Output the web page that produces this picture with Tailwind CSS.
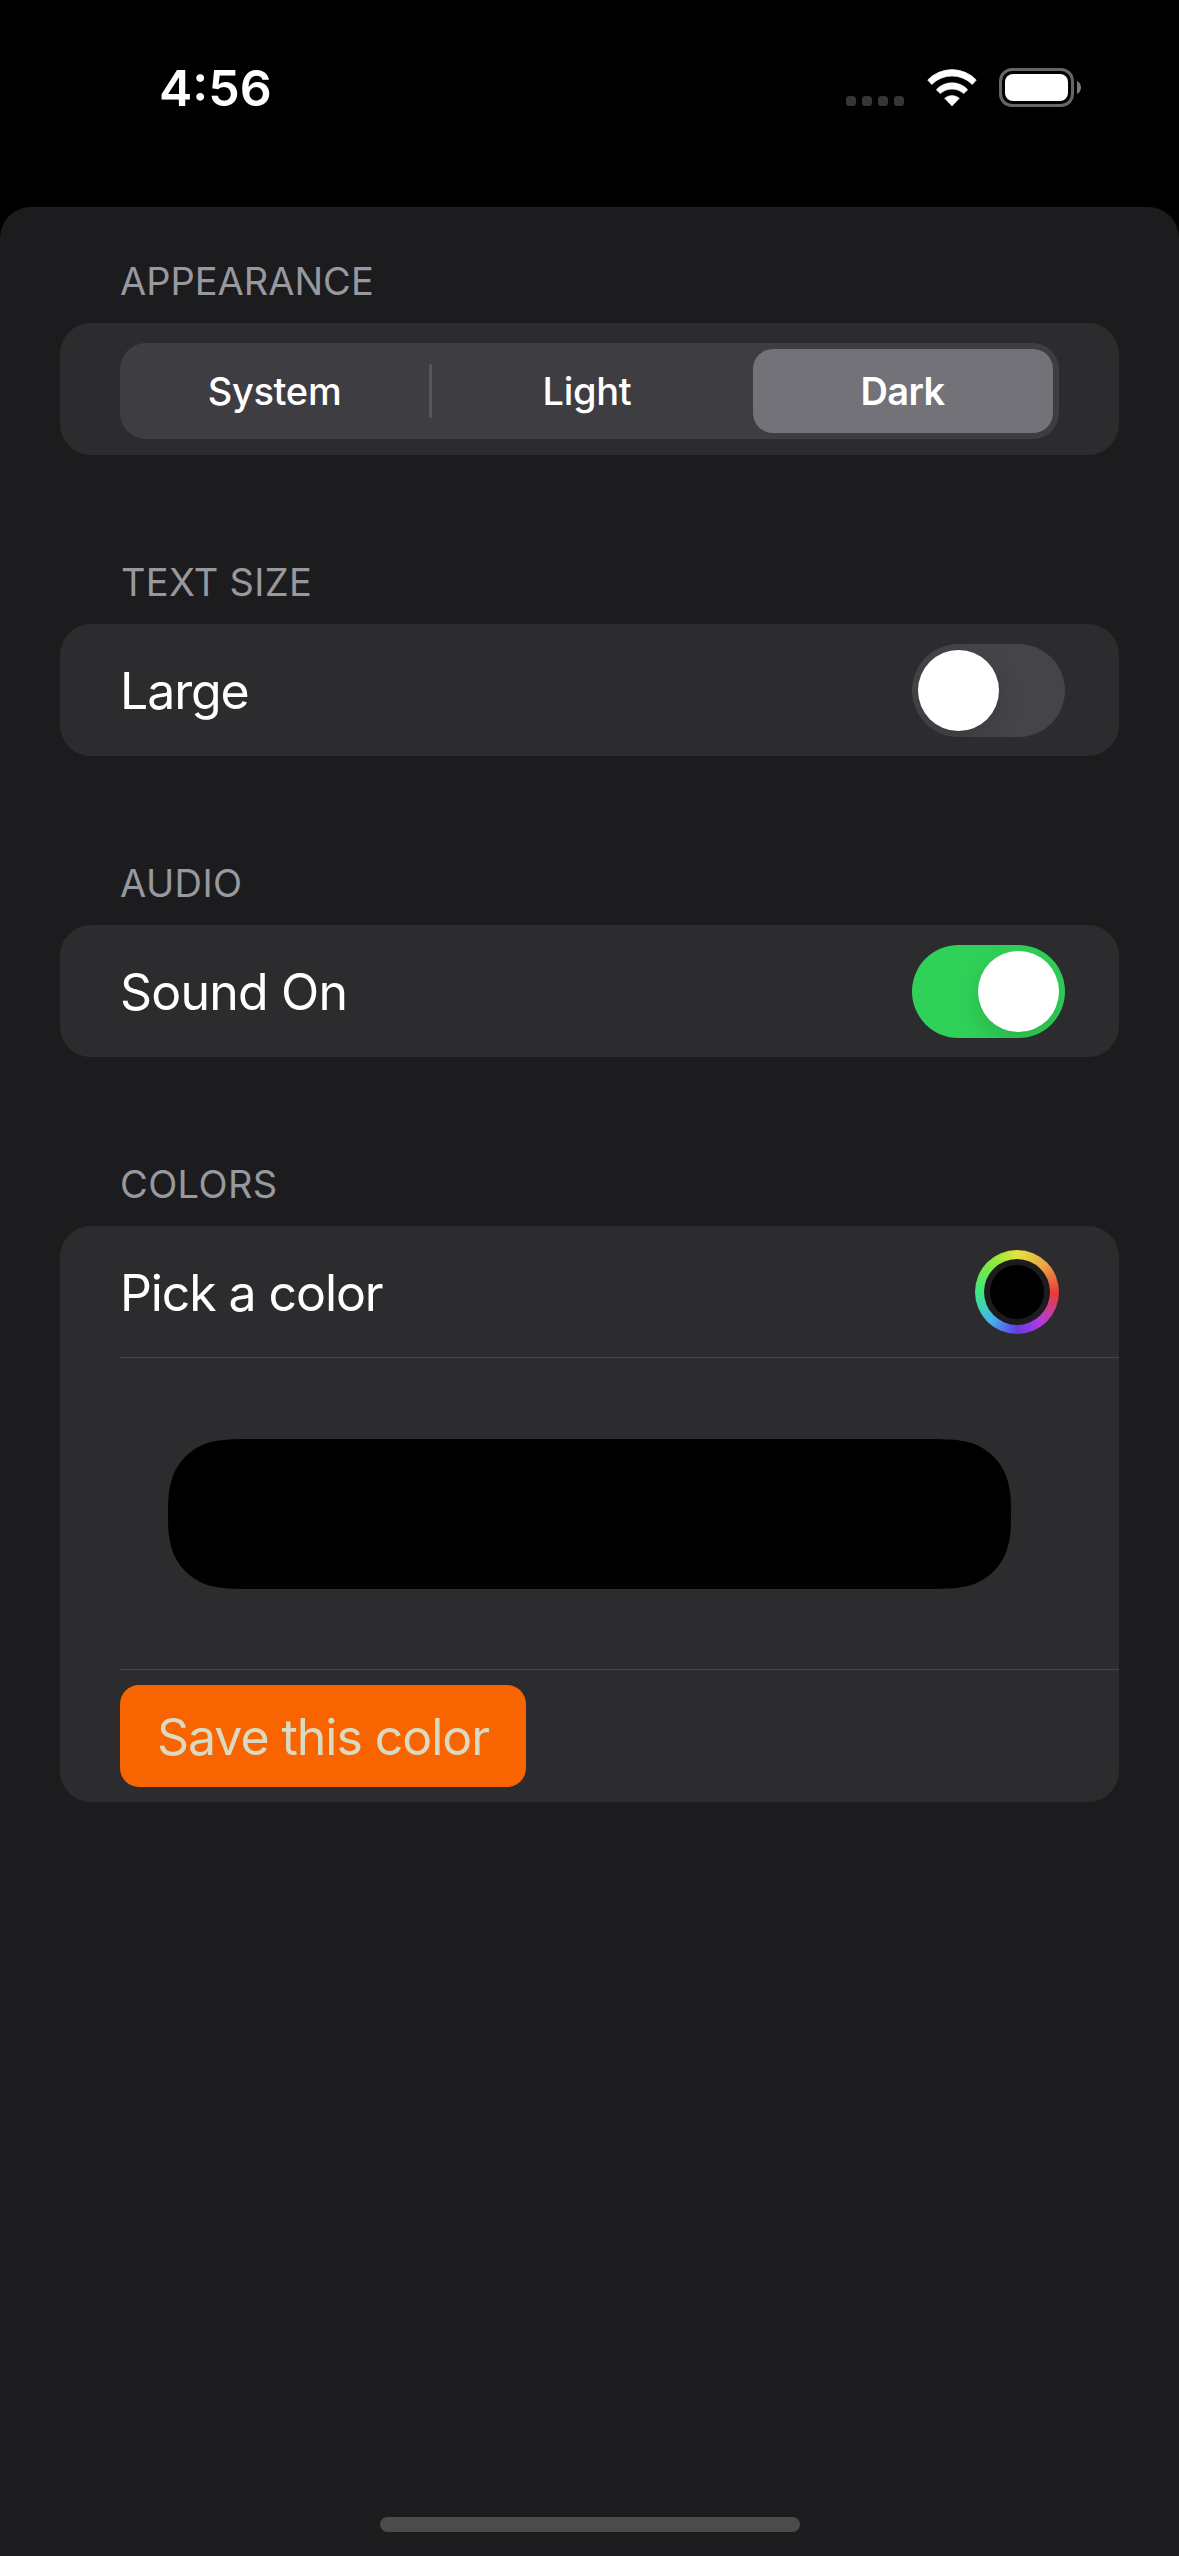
<!DOCTYPE html>
<html lang="en">
<head>
<meta charset="utf-8">
<title>Settings</title>
<script src="https://cdn.jsdelivr.net/npm/@tailwindcss/browser@4"></script>
</head>
<body class="bg-black">
<div class="flex h-[2556px] w-[1179px] flex-col overflow-hidden bg-black font-['Inter',sans-serif] text-white">
  <!-- Status bar -->
  <header class="flex h-[207px] shrink-0 items-start justify-between pt-[58px] pr-[98px] pl-[159px]">
    <div class="text-[50px] leading-[60px] font-semibold">4:56</div>
    <div class="flex h-[60px]">
      <div class="flex gap-[6px] pt-[38px]">
        <i class="size-[10px] rounded-[3.5px] bg-[#363636]"></i>
        <i class="size-[10px] rounded-[3.5px] bg-[#363636]"></i>
        <i class="size-[10px] rounded-[3.5px] bg-[#363636]"></i>
        <i class="size-[10px] rounded-[3.5px] bg-[#363636]"></i>
      </div>
      <svg class="mt-[10.5px] ml-[22.5px] h-[37.6px] w-[50px]" viewBox="0 0 150 113" fill="#fff" stroke="#fff" stroke-width="2" stroke-linejoin="round">
        <path d="M2 33A101 101 0 0 1 148 33L136 46.500A86 86 0 0 0 14 46.500Z"/>
        <path d="M28 62A64 64 0 0 1 122 62L110.500 74A52 52 0 0 0 39.500 74Z"/>
        <path d="M53 88A34 34 0 0 1 97 88L75 111Z"/>
      </svg>
      <div class="mt-[10px] ml-[22.5px] h-[39px] w-[75px] rounded-[13px] border-3 border-[#666] p-[3px]">
        <div class="h-full w-full rounded-[8px] bg-white"></div>
      </div>
      <svg class="mt-[23px] ml-[3px] h-[13px] w-[4px]" viewBox="0 0 4 13" fill="#7a7a7a"><path d="M0 0C2.500 1.200 4 3.500 4 6.500S2.500 11.800 0 13Z"/></svg>
    </div>
  </header>

  <main class="flex flex-1 flex-col rounded-t-[31px] bg-[#1c1c1e] px-[60px] pt-[50px]">
    <section class="mb-[103px]">
      <h2 class="mb-[18px] pl-[60px] text-[38px] leading-[48px] text-[#98989f]">APPEARANCE</h2>
      <div class="h-[132px] rounded-[31px] bg-[#2c2c2e] px-[60px] pt-[20px]">
        <div class="flex h-[96px] items-center rounded-[26px] bg-[#3e3d42] p-[6px] text-[38px] font-medium tracking-[-0.3px]">
          <div class="flex-1 pr-[6px] text-center">System</div>
          <div class="h-[54px] w-[3px] rounded-full bg-[#57565b]"></div>
          <div class="w-[321px] pr-[11px] text-center">Light</div>
          <div class="flex h-[84px] w-[300px] items-center justify-center rounded-[20px] bg-[#737278] pr-[1px] font-semibold tracking-[-0.6px]">Dark</div>
        </div>
      </div>
    </section>

    <section class="mb-[103px]">
      <h2 class="mb-[18px] pl-[61px] text-[38px] leading-[48px] tracking-[0.3px] text-[#98989f]">TEXT SIZE</h2>
      <div class="flex h-[132px] items-center justify-between rounded-[31px] bg-[#2c2c2e] pr-[54px] pl-[60px]">
        <span class="pt-[2px] text-[50px] tracking-[-1.1px]">Large</span>
        <div class="flex h-[93px] w-[153px] justify-start overflow-hidden rounded-full bg-[#454449] p-[6px]">
          <div class="size-[81px] rounded-full bg-white shadow-[0_9px_24px_rgba(0,0,0,0.15)]"></div>
        </div>
      </div>
    </section>

    <section class="mb-[103px]">
      <h2 class="mb-[18px] pl-[60px] text-[38px] leading-[48px] tracking-[0.4px] text-[#98989f]">AUDIO</h2>
      <div class="flex h-[132px] items-center justify-between rounded-[31px] bg-[#2c2c2e] pr-[54px] pl-[60px]">
        <span class="pt-[2px] text-[50px] tracking-[-0.8px]">Sound On</span>
        <div class="flex h-[93px] w-[153px] justify-end overflow-hidden rounded-full bg-[#30d158] p-[6px]">
          <div class="size-[81px] rounded-full bg-white shadow-[0_9px_24px_rgba(0,0,0,0.15)]"></div>
        </div>
      </div>
    </section>

    <section>
      <h2 class="mb-[18px] pl-[60px] text-[38px] leading-[48px] tracking-[0.4px] text-[#98989f]">COLORS</h2>
      <div class="rounded-[31px] bg-[#2c2c2e] pl-[60px]">
        <div class="flex h-[132px] items-center justify-between border-b border-[#464649] pr-[60px]">
          <span class="pt-[3px] text-[50px] tracking-[-1.1px]">Pick a color</span>
          <div class="flex size-[84px] items-center justify-center rounded-full bg-[conic-gradient(#e4e43c,#e8a647_45deg,#ea3a37_92deg,#b23ddd_140deg,#663be6_180deg,#42b4ee_222deg,#3de886_268deg,#80e83e_315deg,#e4e43c)]">
            <div class="flex size-[66px] items-center justify-center rounded-full bg-[#1c1c1e]">
              <div class="size-[54px] rounded-full bg-black"></div>
            </div>
          </div>
        </div>
        <div class="flex h-[312px] items-center border-b border-[#464649] pl-[48px]">
          <svg class="h-[150px] w-[843px]" viewBox="0 0 843 150">
            <path d="M92 0H751C778 0 791 0 805.100 4.500C820.600 10.100 832.900 22.400 838.500 37.900C843 52 843 62 843 75C843 88 843 98 838.500 112.100C832.900 127.600 820.600 139.900 805.100 145.500C791 150 778 150 751 150H92C65 150 52 150 37.900 145.500C22.400 139.900 10.100 127.600 4.500 112.100C0 98 0 88 0 75C0 62 0 52 4.500 37.900C10.100 22.400 22.400 10.100 37.900 4.500C52 0 65 0 92 0Z"/>
          </svg>
        </div>
        <div class="flex h-[132px] items-center">
          <button class="flex h-[102px] w-[406px] items-center justify-center rounded-[19px] bg-[#f86400] pt-[2px] text-[50px] tracking-[-1.05px] text-[#dadac2]">Save this color</button>
        </div>
      </div>
    </section>

    <!-- Home indicator -->
    <div class="mt-auto mb-[24px] h-[15px] w-[420px] self-center rounded-full bg-[#4b4b4b]"></div>
  </main>
</div>
</body>
</html>
